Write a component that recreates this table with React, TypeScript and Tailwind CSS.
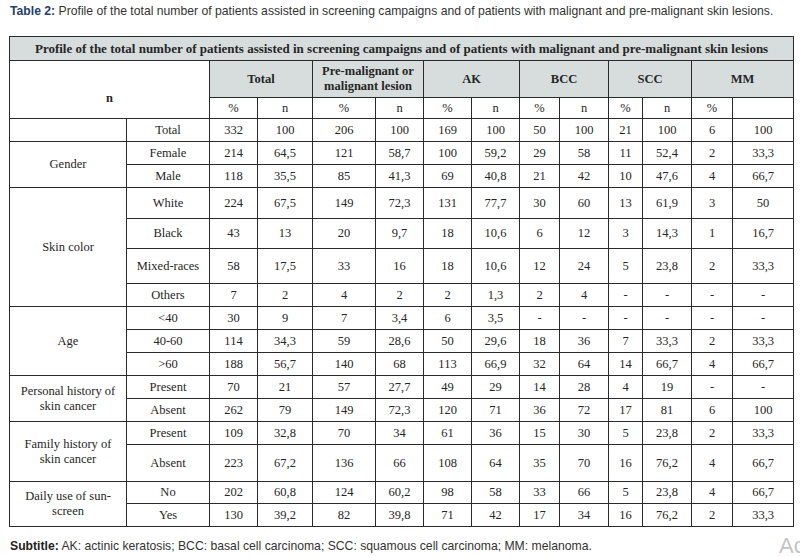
import React from "react"

type Row = { label: string; h: number; values: string[] }
type Group = { label: React.ReactNode; rows: Row[] }

const groups: Group[] = [
  {
    label: "",
    rows: [{ label: "Total", h: 23, values: ["332", "100", "206", "100", "169", "100", "50", "100", "21", "100", "6", "100"] }],
  },
  {
    label: "Gender",
    rows: [
      { label: "Female", h: 23, values: ["214", "64,5", "121", "58,7", "100", "59,2", "29", "58", "11", "52,4", "2", "33,3"] },
      { label: "Male", h: 23, values: ["118", "35,5", "85", "41,3", "69", "40,8", "21", "42", "10", "47,6", "4", "66,7"] },
    ],
  },
  {
    label: "Skin color",
    rows: [
      { label: "White", h: 31, values: ["224", "67,5", "149", "72,3", "131", "77,7", "30", "60", "13", "61,9", "3", "50"] },
      { label: "Black", h: 30, values: ["43", "13", "20", "9,7", "18", "10,6", "6", "12", "3", "14,3", "1", "16,7"] },
      { label: "Mixed-races", h: 35, values: ["58", "17,5", "33", "16", "18", "10,6", "12", "24", "5", "23,8", "2", "33,3"] },
      { label: "Others", h: 23, values: ["7", "2", "4", "2", "2", "1,3", "2", "4", "-", "-", "-", "-"] },
    ],
  },
  {
    label: "Age",
    rows: [
      { label: "<40", h: 23, values: ["30", "9", "7", "3,4", "6", "3,5", "-", "-", "-", "-", "-", "-"] },
      { label: "40-60", h: 23, values: ["114", "34,3", "59", "28,6", "50", "29,6", "18", "36", "7", "33,3", "2", "33,3"] },
      { label: ">60", h: 23, values: ["188", "56,7", "140", "68", "113", "66,9", "32", "64", "14", "66,7", "4", "66,7"] },
    ],
  },
  {
    label: (
      <>
        Personal history of
        <br />
        skin cancer
      </>
    ),
    rows: [
      { label: "Present", h: 23, values: ["70", "21", "57", "27,7", "49", "29", "14", "28", "4", "19", "-", "-"] },
      { label: "Absent", h: 23, values: ["262", "79", "149", "72,3", "120", "71", "36", "72", "17", "81", "6", "100"] },
    ],
  },
  {
    label: (
      <>
        Family history of
        <br />
        skin cancer
      </>
    ),
    rows: [
      { label: "Present", h: 23, values: ["109", "32,8", "70", "34", "61", "36", "15", "30", "5", "23,8", "2", "33,3"] },
      { label: "Absent", h: 37, values: ["223", "67,2", "136", "66", "108", "64", "35", "70", "16", "76,2", "4", "66,7"] },
    ],
  },
  {
    label: (
      <>
        Daily use of sun-
        <br />
        screen
      </>
    ),
    rows: [
      { label: "No", h: 22, values: ["202", "60,8", "124", "60,2", "98", "58", "33", "66", "5", "23,8", "4", "66,7"] },
      { label: "Yes", h: 23, values: ["130", "39,2", "82", "39,8", "71", "42", "17", "34", "16", "76,2", "2", "33,3"] },
    ],
  },
]

const widths = [117, 83, 48, 55, 63, 48, 48, 48, 40, 49, 34, 49, 41, 61]

const cell = "border border-[#2a2a2a] text-center align-middle p-0"

export default function App() {
  return (
    <div className="relative w-[800px] h-[557px] overflow-hidden bg-white">
      <div className="pl-[10px] pt-[4px] h-[36px] text-[12.2px] leading-[15px] text-[#333] font-['Liberation_Sans',Arial,sans-serif]">
        <span className="font-bold text-[#24406a]">Table 2:</span> Profile of the total number of patients assisted in
        screening campaigns and of patients with malignant and pre-malignant skin lesions.
      </div>

      <div className="pl-[9px]">
        <table className="table-fixed border-collapse w-[785px] text-[12.5px] leading-[15px] text-[#262626] font-['Liberation_Serif','DejaVu_Serif',serif]">
          <colgroup>
            {widths.map((w, i) => (
              <col key={i} style={{ width: w }} />
            ))}
          </colgroup>
          <tbody>
            <tr className="h-[24px] bg-[#d7dddd]">
              <td colSpan={14} className={`${cell} font-bold text-[13px]`}>
                Profile of the total number of patients assisted in screening campaigns and of patients with malignant and
                pre-malignant skin lesions
              </td>
            </tr>
            <tr className="h-[37px]">
              <td colSpan={2} rowSpan={2} className={`${cell} bg-white font-bold pt-[18px]`}>
                n
              </td>
              <td colSpan={2} className={`${cell} bg-[#d7dddd] font-bold`}>Total</td>
              <td colSpan={2} className={`${cell} bg-[#d7dddd] font-bold`}>
                Pre-malignant or
                <br />
                malignant lesion
              </td>
              <td colSpan={2} className={`${cell} bg-[#d7dddd] font-bold`}>AK</td>
              <td colSpan={2} className={`${cell} bg-[#d7dddd] font-bold`}>BCC</td>
              <td colSpan={2} className={`${cell} bg-[#d7dddd] font-bold`}>SCC</td>
              <td colSpan={2} className={`${cell} bg-[#d7dddd] font-bold`}>MM</td>
            </tr>
            <tr className="h-[21px]">
              {["%", "n", "%", "n", "%", "n", "%", "n", "%", "n", "%", ""].map((t, i) => (
                <td key={i} className={cell}>
                  {t}
                </td>
              ))}
            </tr>
            {groups.map((g, gi) =>
              g.rows.map((r, ri) => (
                <tr key={`${gi}-${ri}`} style={{ height: r.h }}>
                  {ri === 0 && (
                    <td rowSpan={g.rows.length} className={cell}>
                      {g.label}
                    </td>
                  )}
                  <td className={cell}>{r.label}</td>
                  {r.values.map((v, vi) => (
                    <td key={vi} className={cell}>
                      {v}
                    </td>
                  ))}
                </tr>
              ))
            )}
          </tbody>
        </table>
      </div>

      <div className="pl-[10px] pt-[12px] text-[12.2px] leading-[15px] text-[#333] font-['Liberation_Sans',Arial,sans-serif]">
        <span className="font-bold text-[#222]">Subtitle:</span> AK: actinic keratosis; BCC: basal cell carcinoma; SCC:
        squamous cell carcinoma; MM: melanoma.
      </div>

      <div className="absolute left-[779px] top-[533px] text-[22px] leading-[26px] text-[#c4c4c4] font-['Liberation_Sans',Arial,sans-serif]">
        Ac
      </div>
    </div>
  )
}
